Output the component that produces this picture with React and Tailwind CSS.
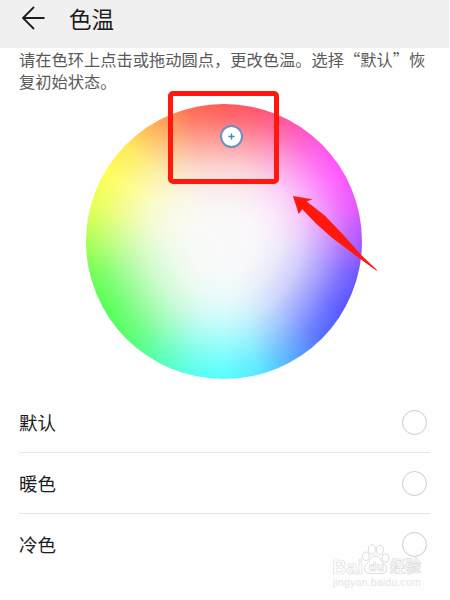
import { useState } from "react";

const modes = ["默认", "暖色", "冷色"];

function ColorWheel(){
    return(
        <div className="relative mx-auto w-[276px] h-[276px]">
            <div className="w-full h-[275px] rounded-full bg-[radial-gradient(circle_closest-side,#fafafa_0%,#fafafafa_24%,#fafafae6_40%,#fafafabc_56%,#fafafa78_72%,#fafafa30_88%,#fafafa0a_100%),conic-gradient(#ff5050_0deg,#ff5068_15deg,#ff50a8_30deg,#ff50e7_45deg,#ff50ff_60deg,#e750ff_75deg,#a850ff_90deg,#6850ff_105deg,#5050ff_120deg,#5068ff_135deg,#50a8ff_150deg,#50e7ff_165deg,#50ffff_180deg,#50ffe7_195deg,#50ffa8_210deg,#50ff68_225deg,#50ff50_240deg,#68ff50_255deg,#a8ff50_270deg,#e7ff50_285deg,#ffff50_300deg,#ffe750_315deg,#ffa850_330deg,#ff6850_345deg,#ff5050_360deg)]"></div>

            {/* handle */}
            <div className="absolute left-[134px] top-[21px] w-[23px] h-[23px] rounded-full border-2 border-[#6e8fc8] bg-[#fcfffd] flex justify-center items-center">
                <svg width="7" height="7" viewBox="0 0 8 8" fill="none" stroke="#4585bd" strokeWidth="1.6">
                    <path d="M4 .6v6.8M.6 4h6.8"/>
                </svg>
            </div>

            {/* highlight box and arrow */}
            <div className="absolute left-[82px] top-[-13px] w-[111px] h-[93px] rounded-[5px] border-[5px] border-[#ff180b]"></div>
            <svg className="absolute left-[206px] top-[91px]" width="86" height="78" viewBox="0 0 86 78">
                <path d="M1 1L20.3 4.3L14.7 6.5L33 20.7L51 39.5L69.7 60.5L85 75L84.5 75.8L68 63.8L39.7 42.5L24 28.5L10.3 14.3L6.7 19Z" fill="#ff180b"/>
            </svg>
        </div>
    )
}

function Watermark(){
    return(
        <div className="absolute left-[332px] top-[545px] w-[92px] h-[46px] font-['Liberation_Sans','Noto_Sans_CJK_SC',sans-serif] pointer-events-none">
            <div className="flex items-center h-[30px] pt-[13px] leading-none">
                <span className="w-[31px] text-[20px] font-bold text-white [-webkit-text-stroke:0.7px_#dedede]">Bai</span>
                <span className="relative w-[27px] h-[20px] flex justify-center items-center">
                    <svg className="absolute left-[-2px] top-[-13px]" width="29" height="31" viewBox="0 0 28 31" fill="#fff" stroke="#dcdcdc" strokeWidth="1">
                        <ellipse cx="4.3" cy="12.3" rx="3.3" ry="4.3"/>
                        <ellipse cx="10.3" cy="5.4" rx="3.4" ry="4.7"/>
                        <ellipse cx="18.4" cy="6" rx="3.4" ry="4.7"/>
                        <ellipse cx="24" cy="14" rx="3.3" ry="4.2"/>
                        <path d="M14 12C9 12 9 17 5.5 19.5C1.5 22.5 2 29.5 8 29.5C11 29.5 12 29.5 14 29.5S18 29.5 20.5 29.5C26 29.5 26.5 23 22.5 19.8C19 17 18.5 12 14 12Z"/>
                    </svg>
                    <span className="relative text-[13px] text-white font-bold [-webkit-text-stroke:0.7px_#dcdcdc]">du</span>
                </span>
                <span className="text-[15.5px] font-bold whitespace-nowrap text-white [-webkit-text-stroke:0.7px_#dadada]">经验</span>
            </div>
            <p className="mt-[1px] ml-[1px] text-[10.5px] leading-[13px] tracking-[0.19px] text-[#e4e4e4]">jingyan.baidu.com</p>
        </div>
    )
}

export default function ColorTemperaturePage(){

    const [mode, setMode] = useState("");

    return(
        <div className="relative w-[450px] h-[600px] overflow-hidden bg-[#fefefe] font-['Noto_Sans_CJK_SC',sans-serif]">

            <header className="w-[449px] h-[48px] bg-[#f0f0f0] flex items-center pb-[12px] pl-[21px]">
                <svg width="24" height="24" viewBox="0 0 24 24" fill="none" stroke="#1c1c1c" strokeWidth="1.8">
                    <path d="M23.5 12H2M13 1L2 12L13 23"/>
                </svg>
                <h1 className="ml-[24px] text-[22.5px] leading-[30px] text-[#1c1c1c]">色温</h1>
            </header>

            <p className="h-[56px] pl-[19px] text-[16.25px] leading-[22px] text-[#5a5a5a] whitespace-nowrap">
                请在色环上点击或拖动圆点，更改色温。选择“默认”恢
                <br/>
                复初始状态。
            </p>

            <div className="w-[448px]">
                <ColorWheel/>
            </div>

            <ul className="mt-[12px] ml-[19px] w-[411px]">
                {modes.map((name)=>(
                    <li key={name} onClick={()=>{
                        setMode(name)
                    }} className="h-[61px] pr-[3px] flex justify-between items-center border-b border-[#e6e6e6] last:border-b-0 cursor-pointer">
                        <span className="pb-[1px] text-[18.5px] leading-[28px] text-[#1c1c1c]">{name}</span>
                        <span className="w-[25px] h-[25px] rounded-full border-[1.5px] border-[#cccccc] flex justify-center items-center">
                            {mode === name && <span className="w-[13px] h-[13px] rounded-full bg-[#007dff]"></span>}
                        </span>
                    </li>
                ))}
            </ul>

            <Watermark/>

        </div>
    )
}
